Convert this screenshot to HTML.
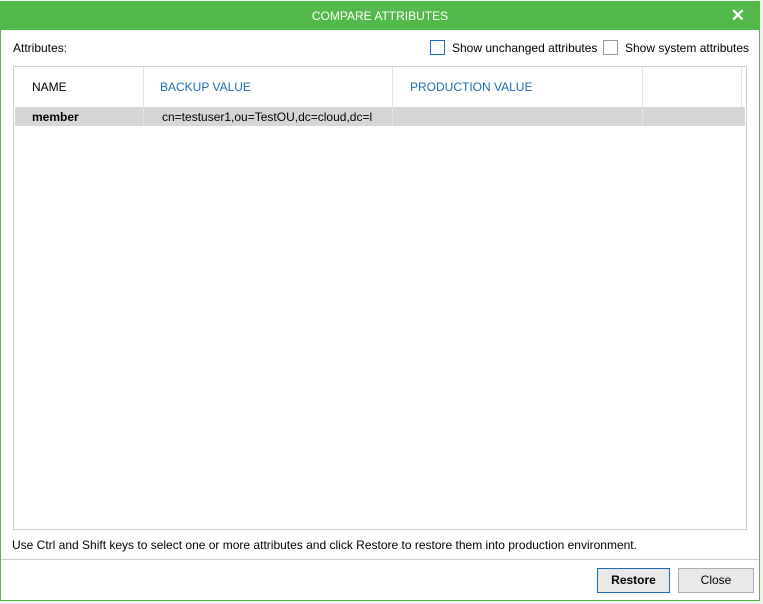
<!DOCTYPE html>
<html><head><style>
body{margin:0;width:763px;height:604px;background:#f0f0f0;position:relative;overflow:hidden;font-family:"Liberation Sans",sans-serif;font-size:12px;color:#000}
.dlg{position:absolute;left:0;top:1px;width:758px;height:598px;border:1px solid #54b94b;background:#fff}
.title{position:absolute;left:0;top:0;width:758px;height:28px;background:#54b94b;color:#fff;text-align:center;line-height:28px;font-size:12px}
.x{position:absolute;right:14px;top:0;color:#fff;font-size:17px;font-weight:bold}
.abs{position:absolute}
.cb{position:absolute;width:13px;height:13px;border:1px solid #777;background:#fff}
.tbl{position:absolute;left:12px;top:64px;width:732px;height:462px;border:1px solid #ccc}
.sep{position:absolute;top:0;width:1px;background:#e3e3e3;height:59px}
.hd{position:absolute;top:13px;font-size:12px}
.btn{position:absolute;top:566px;height:23px;border:1px solid #adadad;background:#e8e8e8;text-align:center;line-height:23px}
</style></head><body>
<div class="dlg">
<div class="title">COMPARE ATTRIBUTES<span class="x">✕</span></div>
<div class="abs" style="left:12px;top:39px">Attributes:</div>
<div class="cb" style="left:429px;top:38px;border-color:#1e6bb8"></div>
<div class="abs" style="left:451px;top:39px">Show unchanged attributes</div>
<div class="cb" style="left:602px;top:38px;border-color:#999"></div>
<div class="abs" style="left:624px;top:39px">Show system attributes</div>
<div class="tbl">
 <div class="abs" style="left:1px;top:40px;width:730px;height:19px;background:#d6d6d6"></div>
 <div class="sep" style="left:129px"></div>
 <div class="sep" style="left:378px"></div>
 <div class="sep" style="left:628px"></div>
 <div class="sep" style="left:727px;height:40px"></div>
 <div class="hd" style="left:18px">NAME</div>
 <div class="hd" style="left:146px;color:#1e6bb8">BACKUP VALUE</div>
 <div class="hd" style="left:396px;color:#1e6bb8">PRODUCTION VALUE</div>
 <div class="abs" style="left:18px;top:43px;font-weight:bold">member</div>
 <div class="abs" style="left:148px;top:43px">cn=testuser1,ou=TestOU,dc=cloud,dc=l</div>
</div>
<div class="abs" style="left:11px;top:536px">Use Ctrl and Shift keys to select one or more attributes and click Restore to restore them into production environment.</div>
<div class="abs" style="left:0;top:557px;width:758px;height:1px;background:#ccc"></div>
<div class="btn" style="left:596px;width:71px;border-color:#1e6bb8;font-weight:bold">Restore</div>
<div class="btn" style="left:677px;width:74px">Close</div>
</div>
</body></html>
